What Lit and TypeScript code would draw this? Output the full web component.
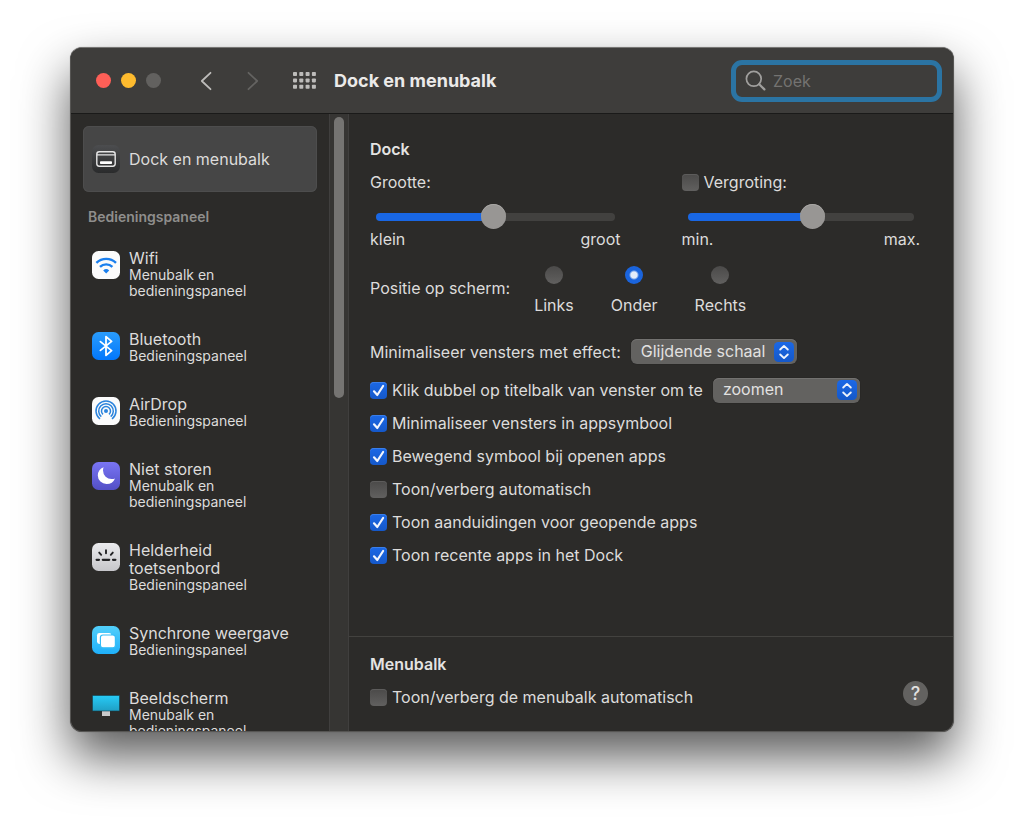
import { LitElement, html, css, svg, nothing, TemplateResult } from "lit";
import { customElement, property, state } from "lit/decorators.js";
import { classMap } from "lit/directives/class-map.js";

interface PanelItem {
  id: string;
  title: string;
  sub: string;
}

const ITEMS: PanelItem[] = [
  { id: "wifi", title: "Wifi", sub: "Menubalk en bedieningspaneel" },
  { id: "bluetooth", title: "Bluetooth", sub: "Bedieningspaneel" },
  { id: "airdrop", title: "AirDrop", sub: "Bedieningspaneel" },
  { id: "moon", title: "Niet storen", sub: "Menubalk en bedieningspaneel" },
  { id: "keyboard", title: "Helderheid toetsenbord", sub: "Bedieningspaneel" },
  { id: "mirror", title: "Synchrone weergave", sub: "Bedieningspaneel" },
  { id: "display", title: "Beeldscherm", sub: "Menubalk en bedieningspaneel" },
];

const tile = (fill: string) => svg`<rect width="28" height="28" rx="6.5" fill=${fill}></rect>`;

const ICONS: Record<string, TemplateResult> = {
  dock: svg`
    <defs><linearGradient id="dk" x1="0" y1="0" x2="0" y2="1"><stop offset="0" stop-color="#4c4d4f"/><stop offset="1" stop-color="#2a2b2c"/></linearGradient></defs>
    ${tile("url(#dk)")}
    <rect x="4.8" y="6.8" width="18.4" height="14.4" rx="2.4" fill="none" stroke="#e6e6e6" stroke-width="1.4"/>
    <path d="M5 9.8h18" stroke="#e6e6e6" stroke-width="1.2"/>
    <rect x="8" y="16.2" width="12" height="2.8" rx=".8" fill="#fff"/>`,
  wifi: svg`
    ${tile("#fbfbfb")}
    <g fill="none" stroke="#1a7fee" stroke-width="2.4" stroke-linecap="butt">
      <path d="M4.400 11.900a14 14 0 0 1 19.600 0"/>
      <path d="M8 15.900a8.800 8.800 0 0 1 12.400 0"/>
    </g>
    <path d="M14.200 22.600l-3-3.200a4.300 4.300 0 0 1 6 0z" fill="#1a7fee"/>`,
  bluetooth: svg`
    <defs><linearGradient id="bt" x1="0" y1="0" x2="0" y2="1"><stop offset="0" stop-color="#2a9cfb"/><stop offset="1" stop-color="#0277fc"/></linearGradient></defs>
    ${tile("url(#bt)")}
    <path d="M8.400 9.600l11.200 9-5.600 4.800V4.600l5.600 4.800-11.200 9" fill="none" stroke="#fff" stroke-width="1.800" stroke-linejoin="round" stroke-linecap="round"/>`,
  airdrop: svg`
    ${tile("#fbfbfb")}
    <g fill="none" stroke="#2b83dc" stroke-width="1.500">
      <path d="M8 22a10 10 0 1 1 12 0"/>
      <path d="M9.300 19.600a7.300 7.300 0 1 1 9.400 0"/>
      <path d="M11 17.400a4.500 4.500 0 1 1 6 0"/>
    </g>
    <circle cx="14" cy="14" r="2" fill="#2b83dc"/>`,
  moon: svg`
    <defs><linearGradient id="mn" x1="0" y1="0" x2="0" y2="1"><stop offset="0" stop-color="#7a75f4"/><stop offset="1" stop-color="#524fc6"/></linearGradient></defs>
    ${tile("url(#mn)")}
    <path d="M11.600 5.200a9 9 0 0 0-5.800 8.300 8.700 8.700 0 0 0 8.800 8.600 9 9 0 0 0 8.400-5.600c-1 .4-2 .6-3.200.6a8.600 8.600 0 0 1-8.800-8.500c0-1.200.2-2.400.6-3.400z" fill="#fff"/>`,
  keyboard: svg`
    <defs><linearGradient id="kb" x1="0" y1="0" x2="0" y2="1"><stop offset="0" stop-color="#ebebed"/><stop offset="1" stop-color="#c6c6ca"/></linearGradient></defs>
    ${tile("url(#kb)")}
    <g stroke="#232325" stroke-width="1.900" stroke-linecap="round">
      <path d="M14 7.200v3M7.200 9.600l2 2.200M20.800 9.600l-2 2.200"/>
      <path d="M4.600 16.800h2.400M10.800 16.800h6.400M21 16.800h2.400" stroke-width="2.200"/>
    </g>`,
  mirror: svg`
    <defs><linearGradient id="mr" x1="0" y1="0" x2="0" y2="1"><stop offset="0" stop-color="#52cffa"/><stop offset="1" stop-color="#1fb0fa"/></linearGradient></defs>
    ${tile("url(#mr)")}
    <rect x="5" y="7" width="14.400" height="11" rx="2.400" fill="#fff"/>
    <rect x="8.400" y="9" width="15" height="12.800" rx="2.600" fill="#fff" stroke="#35bdf8" stroke-width="1.200"/>`,
  display: svg`
    <defs><linearGradient id="ds" x1="0" y1="0" x2="0" y2="1"><stop offset="0" stop-color="#27cbf7"/><stop offset="1" stop-color="#1f9fc4"/></linearGradient></defs>
    <rect x="10" y="19" width="8" height="6" fill="#c9c9c9"/>
    <rect x=".5" y="4.500" width="27" height="15.500" fill="url(#ds)" stroke="#143f4c" stroke-width=".6"/>`,
};

@customElement("panel-icon")
export class PanelIcon extends LitElement {
  @property() name = "";
  static styles = css`
    :host { display: block; flex: none; width: 28px; height: 28px; }
    .glyph { display: block; width: 28px; height: 28px; }
  `;
  render() {
    return html`<svg class="glyph" viewBox="0 0 28 28" aria-hidden="true">${ICONS[this.name] ?? nothing}</svg>`;
  }
}

@customElement("check-row")
export class CheckRow extends LitElement {
  @property() label = "";
  @property({ type: Boolean }) checked = false;
  static styles = css`
    :host { display: block; }
    .row { display: flex; align-items: center; gap: 5px; line-height: 20px; }
    .tick { display: grid; flex: none; width: 17px; height: 17px; }
    .box {
      appearance: none; grid-area: 1 / 1; width: 17px; height: 17px; margin: 0; border-radius: 4px;
      background: linear-gradient(#4b4a49, #61605f); box-shadow: inset 0 1px 0 #5d5c5b;
    }
    .box:checked { background: linear-gradient(#1b68e6, #1558c9); box-shadow: inset 0 1px 0 #3b7fea; }
    .mark { grid-area: 1 / 1; width: 17px; height: 17px; pointer-events: none; z-index: 1; }
  `;
  private toggle(e: Event) {
    this.checked = (e.target as HTMLInputElement).checked;
  }
  render() {
    return html`<label class="row">
      <span class="tick">
        <input class="box" type="checkbox" .checked=${this.checked} @change=${this.toggle} />
        ${this.checked
          ? html`<svg class="mark" viewBox="0 0 17 17"><path d="M4 9.300l3.300 3.700 5.800-9" fill="none" stroke="#f1f5fd" stroke-width="2.200" stroke-linecap="round" stroke-linejoin="round"/></svg>`
          : nothing}
      </span>
      <span>${this.label}</span>
    </label>`;
  }
}

@customElement("pop-up")
export class PopUp extends LitElement {
  @property() label = "";
  @property({ type: Array }) options: string[] = [];
  static styles = css`
    :host { display: block; }
    .wrap { display: grid; align-items: center; }
    .select {
      appearance: none; grid-area: 1 / 1; width: 100%; height: 25px; margin: 0; padding: 0 31px 2px 10px;
      border: 0; border-radius: 6px; color: #e2e1e0; font: inherit; line-height: 20px;
      background: #636260; box-shadow: inset 0 1px 0 #737270, 0 0 1px #1c1c1b;
    }
    .arrows { grid-area: 1 / 1; justify-self: end; width: 20px; height: 20px; margin-right: 3px; pointer-events: none; z-index: 1; }
  `;
  render() {
    return html`<div class="wrap">
      <select class="select" aria-label=${this.label}>${this.options.map((o) => html`<option>${o}</option>`)}</select>
      <svg class="arrows" viewBox="0 0 20 20" aria-hidden="true">
        <defs><linearGradient id="ar" x1="0" y1="0" x2="0" y2="1"><stop offset="0" stop-color="#1b68e6"/><stop offset="1" stop-color="#1558c9"/></linearGradient></defs>
        <rect width="20" height="20" rx="4.500" fill="url(#ar)"/>
        <path d="M6.200 7.500L10 3.900l3.800 3.600M6.200 12.500l3.800 3.600 3.800-3.600" fill="none" stroke="#eef3fc" stroke-width="1.900" stroke-linecap="round" stroke-linejoin="round"/>
      </svg>
    </div>`;
  }
}

@customElement("value-slider")
export class ValueSlider extends LitElement {
  @property() label = "";
  @property() low = "";
  @property() high = "";
  @property({ type: Number }) value = 50;
  static styles = css`
    :host { display: block; }
    .range { appearance: none; display: block; box-sizing: border-box; width: calc(100% - 12px); height: 25px; margin: 0 6px; background: none; }
    .range::-webkit-slider-runnable-track {
      height: 8px; border-radius: 4px;
      background: linear-gradient(to right, #1967e4 var(--fill), #42413f var(--fill));
    }
    .range::-webkit-slider-thumb {
      appearance: none; width: 25px; height: 25px; margin-top: -9px; border-radius: 50%;
      background: #989694; box-shadow: inset 0 1px 0 #a8a6a4;
    }
    .ends { display: flex; justify-content: space-between; line-height: 20px; }
  `;
  render() {
    return html`
      <input class="range" type="range" min="0" max="100" aria-label=${this.label} .value=${String(this.value)}
        style="--fill: ${this.value}%"
        @input=${(e: Event) => (this.value = Number((e.target as HTMLInputElement).value))} />
      <div class="ends"><span>${this.low}</span><span>${this.high}</span></div>`;
  }
}

@customElement("app-root")
export class AppRoot extends LitElement {
  @state() private selected = "dock";
  @state() private position = "Onder";

  static styles = css`
    :host {
      display: grid; grid-template-columns: minmax(0, 1fr); grid-template-rows: minmax(0, 1fr);
      box-sizing: border-box; height: 100vh; padding: 47px 70px 93px; overflow: hidden;
      background: #fff; color: #dddcdb; font: 16px/20px Inter, "Liberation Sans", sans-serif;
    }
    .window {
      display: flex; flex-direction: column; min-height: 0; overflow: hidden; border-radius: 12px;
      border: 1px solid #565553; border-top-color: #777674; background: #2c2b29;
      box-shadow: 0 25px 50px rgba(0, 0, 0, 0.65), 0 0 1px rgba(0, 0, 0, 0.4);
    }
    .bar { display: flex; align-items: center; height: 65px; flex: none; padding: 0 11px 0 25px; background: #3e3d3b; border-bottom: 1px solid #1a1a19; }
    .lights { display: flex; gap: 10px; }
    .light { width: 15px; height: 15px; padding: 0; border: 0; border-radius: 50%; background: #62615f; }
    .close { background: #fe5f57; }
    .minimize { background: #febb2e; }
    .nav { display: flex; gap: 27px; margin: 0 30px 0 35px; }
    .plain { display: grid; place-items: center; width: 20px; height: 24px; padding: 0; border: 0; background: none; }
    .all { width: 24px; }
    .heading { margin: 0 auto 0 17px; font-size: 18px; line-height: 24px; font-weight: 700; color: #ebeae9; }
    .search {
      display: flex; align-items: center; gap: 7px; box-sizing: border-box; width: 211px; height: 42px; padding: 0 9px;
      border: 5px solid #2b74a3; border-radius: 11px;
    }
    .field { flex: 1; min-width: 0; padding: 0; border: 0; outline: 0; background: none; color: #dddcdb; font: inherit; }
    .field::placeholder { color: #747371; opacity: 1; }
    .body { display: flex; flex: 1; min-height: 0; }

    .side { display: flex; flex: none; width: 278px; min-height: 0; }
    .list { flex: 1; min-width: 0; overflow: hidden; padding: 12px 12px 0; }
    .item {
      display: flex; gap: 9px; box-sizing: border-box; width: 100%; padding: 0 24px 31px 9px; border: 0; border-radius: 6px;
      background: none; color: inherit; font: inherit; text-align: left;
    }
    .item .text { display: block; }
    .item panel-icon { margin-top: 2px; }
    .item.top { align-items: center; height: 66px; padding-bottom: 0; }
    .item.top panel-icon { margin-top: 0; }
    .item.on { background: #464646; box-shadow: inset 0 0 0 1px #4d4d4d; }
    .name { display: block; line-height: 18px; }
    .sub { display: block; width: 130px; font-size: 14px; line-height: 16px; }
    .group { margin: 15px 5px 22px; font-size: 14px; line-height: 20px; font-weight: 600; color: #8f8e8c; }
    .track { flex: none; box-sizing: border-box; width: 20px; padding: 3px 4px; border: solid #403f3e; border-width: 0 1px; background: #363533; }
    .thumb { height: 46%; width: 10px; border-radius: 5px; background: #757472; }

    .main { display: flex; flex: 1; flex-direction: column; min-width: 0; }
    .dock { flex: 1; padding: 25px 33px 0 21px; }
    .title { margin: 0; font-size: 16px; line-height: 20px; font-weight: 600; color: #e4e3e2; }
    .sliders { display: grid; grid-template-columns: 250fr 238fr; column-gap: 61px; margin-top: 13px; }
    .caption { margin-bottom: 12px; }
    .positions { display: flex; align-items: center; gap: 24px; margin: 17px 0 24px; }
    .prompt { padding-bottom: 6px; }
    .radios { display: flex; gap: 37px; }
    .radio { display: flex; flex-direction: column; align-items: center; gap: 11px; }
    .dot { appearance: none; width: 18px; height: 18px; margin: 0; border-radius: 50%; background: linear-gradient(#4b4a49, #61605f); }
    .dot:checked { background: radial-gradient(circle, #e3ebfa 0 3px, #1a64dd 5px); }
    .line { display: flex; align-items: center; gap: 10px; height: 25px; }
    .wide { width: 147px; }
    .checks { display: flex; flex-direction: column; gap: 13px; margin-top: 16px; }
    .checks .line { height: 20px; }
    .menubar { display: flex; align-items: center; justify-content: space-between; padding: 17px 25px 24px 21px; border-top: 1px solid #43423f; }
    .stack { display: flex; flex-direction: column; gap: 13px; }
    .help { align-self: flex-end; width: 25px; height: 25px; margin-bottom: 1px; padding: 0; border: 0; border-radius: 50%; background: #636260; color: #e2e1e0; font: 500 18px/25px Inter, sans-serif; }
  `;

  private renderBar() {
    return html`<header class="bar">
      <div class="lights">
        <button class="light close" aria-label="Sluit"></button>
        <button class="light minimize" aria-label="Minimaliseer"></button>
        <button class="light" aria-label="Zoom" disabled></button>
      </div>
      <div class="nav">
        <button class="plain" aria-label="Vorige"><svg width="12" height="20" viewBox="0 0 12 20"><path d="M10.500 1.800L1.800 10l8.700 8.200" fill="none" stroke="#bdbcba" stroke-width="1.800" stroke-linecap="round" stroke-linejoin="round"/></svg></button>
        <button class="plain" aria-label="Volgende" disabled><svg width="12" height="20" viewBox="0 0 12 20"><path d="M1.500 1.800l8.700 8.200-8.700 8.200" fill="none" stroke="#646361" stroke-width="1.800" stroke-linecap="round" stroke-linejoin="round"/></svg></button>
      </div>
      <button class="plain all" aria-label="Toon alles">
        <svg width="24" height="17" viewBox="0 0 24 17" fill="#bdbcba">
          ${[0, 1, 2].map((r) => [0, 1, 2, 3].map((c) => svg`<rect x=${c * 6.300} y=${r * 6.400} width="4" height="4" rx=".8"/>`))}
        </svg>
      </button>
      <h1 class="heading">Dock en menubalk</h1>
      <label class="search">
        <svg width="21" height="21" viewBox="0 0 21 21"><circle cx="8.800" cy="8.800" r="7.400" fill="none" stroke="#a09f9d" stroke-width="1.700"/><path d="M14.200 14.200l5.200 5.200" stroke="#a09f9d" stroke-width="2.200" stroke-linecap="round"/></svg>
        <input class="field" type="search" placeholder="Zoek" aria-label="Zoek" />
      </label>
    </header>`;
  }

  private renderSide() {
    return html`<aside class="side">
      <nav class="list">
        <button class=${classMap({ item: true, top: true, on: this.selected === "dock" })} @click=${() => (this.selected = "dock")}>
          <panel-icon name="dock"></panel-icon><span class="text"><span class="name">Dock en menubalk</span></span>
        </button>
        <h2 class="group">Bedieningspaneel</h2>
        ${ITEMS.map(
          (i) => html`<button class=${classMap({ item: true, on: this.selected === i.id })} @click=${() => (this.selected = i.id)}>
            <panel-icon name=${i.id}></panel-icon>
            <span class="text"><span class="name">${i.title}</span><span class="sub">${i.sub}</span></span>
          </button>`
        )}
      </nav>
      <div class="track"><div class="thumb"></div></div>
    </aside>`;
  }

  render() {
    return html`<div class="window">
      ${this.renderBar()}
      <div class="body">
        ${this.renderSide()}
        <main class="main">
          <section class="dock">
            <h2 class="title">Dock</h2>
            <div class="sliders">
              <div>
                <div class="caption">Grootte:</div>
                <value-slider label="Grootte" low="klein" high="groot" value="49"></value-slider>
              </div>
              <div>
                <div class="caption"><check-row label="Vergroting:"></check-row></div>
                <value-slider label="Vergroting" low="min." high="max." value="56"></value-slider>
              </div>
            </div>
            <div class="positions" role="radiogroup" aria-label="Positie op scherm">
              <span class="prompt">Positie op scherm:</span>
              <div class="radios">
                ${["Links", "Onder", "Rechts"].map(
                  (p) => html`<label class="radio">
                    <input class="dot" type="radio" name="position" .checked=${this.position === p} @change=${() => (this.position = p)} />
                    <span>${p}</span>
                  </label>`
                )}
              </div>
            </div>
            <div class="line">
              <span>Minimaliseer vensters met effect:</span>
              <pop-up label="Minimaliseer vensters met effect" .options=${["Glijdende schaal"]}></pop-up>
            </div>
            <div class="checks">
              <div class="line">
                <check-row checked label="Klik dubbel op titelbalk van venster om te"></check-row>
                <pop-up class="wide" label="Klik dubbel op titelbalk" .options=${["zoomen"]}></pop-up>
              </div>
              <check-row checked label="Minimaliseer vensters in appsymbool"></check-row>
              <check-row checked label="Bewegend symbool bij openen apps"></check-row>
              <check-row label="Toon/verberg automatisch"></check-row>
              <check-row checked label="Toon aanduidingen voor geopende apps"></check-row>
              <check-row checked label="Toon recente apps in het Dock"></check-row>
            </div>
          </section>
          <section class="menubar">
            <div class="stack">
              <h2 class="title">Menubalk</h2>
              <check-row label="Toon/verberg de menubalk automatisch"></check-row>
            </div>
            <button class="help" aria-label="Help">?</button>
          </section>
        </main>
      </div>
    </div>`;
  }
}
